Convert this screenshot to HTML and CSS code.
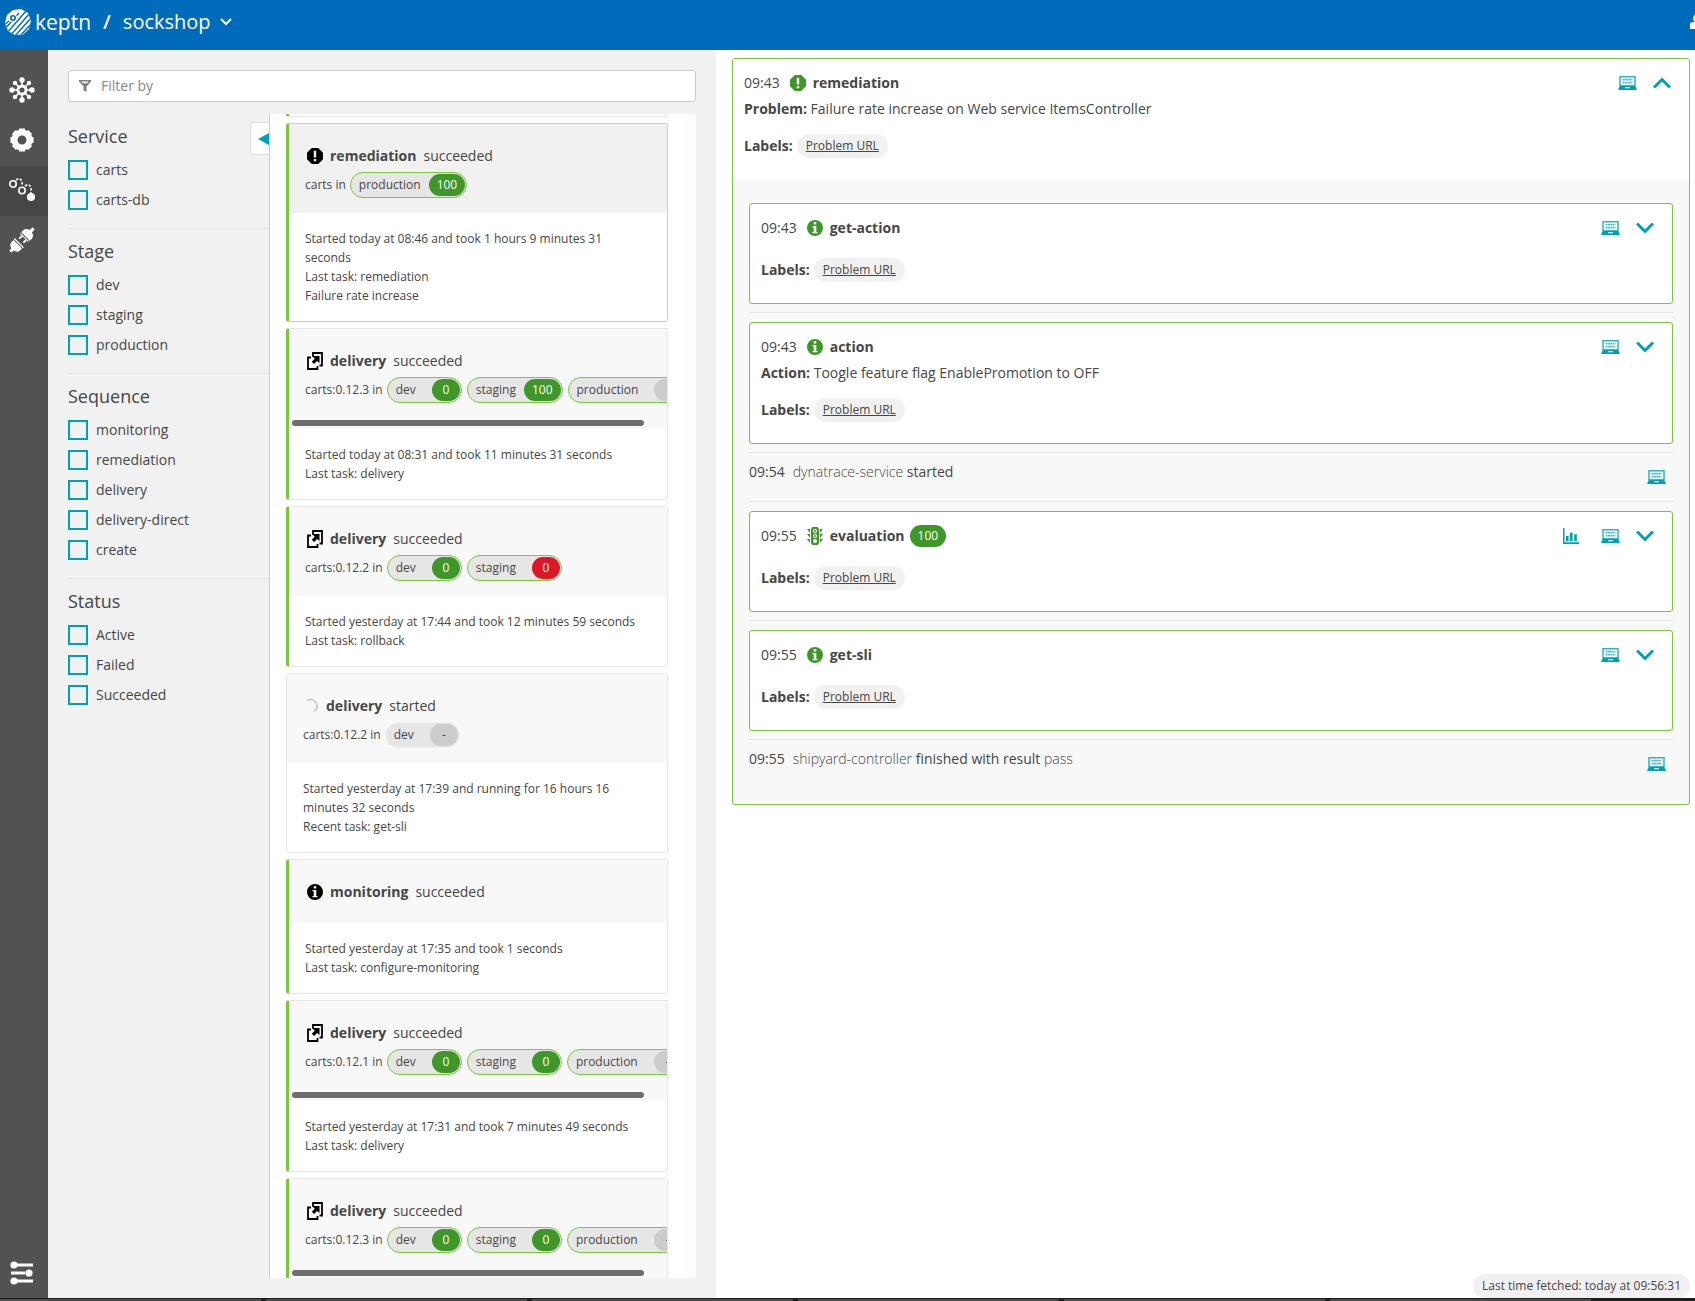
FILE: index.html
```html
<!DOCTYPE html>
<html lang="en">
<head>
<meta charset="utf-8">
<title>keptn / sockshop</title>
<link rel="stylesheet" href="styles.css">
</head>
<body>
<svg class="sprite" aria-hidden="true">
  <symbol id="i-problem" viewBox="0 0 16 16"><path fill="currentColor" fill-rule="evenodd" d="M4.8 0h6.4L16 4.8v6.4L11.200 16H4.8L0 11.200V4.800zM6.800 2.800h2.400v6.700H6.800zM6.800 11h2.400v2.200H6.800z"/></symbol>
  <symbol id="i-info" viewBox="0 0 16 16"><path fill="currentColor" fill-rule="evenodd" d="M8 0a8 8 0 1 1 0 16A8 8 0 0 1 8 0zM6.700 2.200v2.400h2.600V2.200zM5.500 6v1.300h1.200v4.700H5.500v1.300h5V12H9.300V6z"/></symbol>
  <symbol id="i-delivery" viewBox="0 0 16 18"><path fill="none" stroke="currentColor" stroke-width="1.800" d="M6 4.500V1h9v12.500h-2.500M4 5.500H1V17h9.500v-3"/><path fill="currentColor" d="M5 4H12.500v7L10 9l-3 3-2.200-2.200 3-3z"/></symbol>
  <symbol id="i-light" viewBox="0 0 16 18"><path fill="currentColor" fill-rule="evenodd" d="M5.500 0h5L12 2v14l-1.500 2h-5L4 16V2zM8 2a2 2 0 1 0 0 4 2 2 0 0 0 0-4zM8 7a2 2 0 1 0 0 4 2 2 0 0 0 0-4zM8 12a2 2 0 1 0 0 4 2 2 0 0 0 0-4z"/><circle cx="8" cy="4" r="1" fill="currentColor"/><circle cx="8" cy="9" r="1" fill="currentColor"/><path fill="currentColor" d="M0 2h3v4zM0 7h3v4zM0 12h3v4zM16 2h-3v4zM16 7h-3v4zM16 12h-3v4z"/></symbol>
  <symbol id="i-laptop" viewBox="0 0 19 14"><path fill="none" stroke="currentColor" stroke-width="1.500" opacity=".8" d="M2 10V.7h15V10"/><path stroke="currentColor" stroke-width="1.800" opacity=".7" stroke-dasharray="2 .4" d="M4.500 3.700h10M4.500 6.700h10"/><path fill="currentColor" fill-rule="evenodd" d="M2 9.200h15l2 4.800H0zM7 11.200v1h5v-1z"/></symbol>
  <symbol id="i-down" viewBox="0 0 18 12"><path fill="none" stroke="currentColor" stroke-width="3" d="M1 1.500l8 8 8-8"/></symbol>
  <symbol id="i-up" viewBox="0 0 18 12"><path fill="none" stroke="currentColor" stroke-width="3" d="M1 10.500l8-8 8 8"/></symbol>
  <symbol id="i-chart" viewBox="0 0 16 16"><path fill="currentColor" d="M0 0h1.500v14.300H16V16H0zM3 8h2.600v5H3zM7 4.500h2.600V13H7zM11.200 6.200h2.600V13h-2.600z"/></symbol>
</svg>

<header class="topbar">
  <a class="brand" href="#">
    <svg class="logo" viewBox="0 0 26 26" aria-hidden="true">
      <clipPath id="hex"><path d="M8 1l8-1 7 4 3 8-2 8-6 5.500-8 .5-7-4L0 14 2 6z"/></clipPath>
      <g clip-path="url(#hex)"><rect width="26" height="26" fill="#fff"/><path stroke="#006bba" stroke-width="1.400" fill="none" d="M-2 17L4 12M-1 21L14 4M1 25L22 1M5 27L25 4M9 28L27 8M14 28L28 13"/><circle cx="8" cy="9" r="4" fill="#fff"/><circle cx="8" cy="9" r="2.200" fill="none" stroke="#006bba" stroke-width="1.600"/></g>
    </svg>
    <span>keptn</span>
  </a>
  <span class="slash">/</span>
  <button class="project" type="button">sockshop
    <svg class="caret" viewBox="0 0 12 8" aria-hidden="true"><path fill="none" stroke="#fff" stroke-width="2" d="M1 1l5 5 5-5"/></svg>
  </button>
  <svg class="user" viewBox="0 0 5 16" aria-hidden="true"><circle cx="8" cy="4.500" r="4.800" fill="#fff"/><path fill="#fff" d="M0 9l3-1h5v7H0z"/></svg>
</header>

<div class="shell">
  <nav class="rail" aria-label="Main">
    <a href="#" aria-label="Environment"><svg viewBox="0 0 26 26"><g stroke="#fff" stroke-width="1.600"><path d="M13 3v20M3 13h20M6 6l14 14M20 6L6 20"/></g><circle cx="13" cy="13" r="5.500" fill="#fff"/><circle cx="13" cy="13" r="2.600" fill="#525252"/><g fill="#fff"><circle cx="13" cy="3" r="2.700"/><circle cx="13" cy="23" r="2.700"/><circle cx="3" cy="13" r="2.700"/><circle cx="23" cy="13" r="2.700"/><circle cx="6" cy="6" r="2.200"/><circle cx="20" cy="6" r="2.200"/><circle cx="6" cy="20" r="2.200"/><circle cx="20" cy="20" r="2.200"/></g></svg></a>
    <a href="#" aria-label="Services"><svg viewBox="0 0 26 26"><circle cx="13" cy="13" r="7.500" fill="none" stroke="#fff" stroke-width="6"/><path stroke="#fff" stroke-width="6" stroke-linejoin="round" d="M10 4.500l6 0M10 21.500l6 0M4.500 10v6M21.500 10v6M5 9l4-4M17 5l4 4M5 17l4 4M21 17l-4 4"/></svg></a>
    <a class="active" href="#" aria-label="Sequences"><svg viewBox="0 0 26 26"><g fill="none" stroke="#fff" stroke-width="1.600"><circle cx="4" cy="7" r="3.200"/><circle cx="13" cy="13.500" r="3.200"/><path stroke-dasharray="2.500 1.500" d="M7 3c4-3 7 0 6 6M16 9c4-3 7 0 6 7"/></g><circle cx="22" cy="20" r="4" fill="#fff"/></svg></a>
    <a href="#" aria-label="Integration"><svg viewBox="0 0 26 26"><g transform="translate(13 13) rotate(-45)"><path fill="#fff" d="M5 -6h2.500c3 0 4.500 2 5 4.500h4v3h-4c-.5 2.500-2 4.500-5 4.500H5zM3 -6h1v12H3zM-1 -3.800h4v1.800h-4zM-1 2h4v1.800h-4zM-6 -6h-2.500c-3 0-4.500 2-5 4.500h-3v3h3c.5 2.500 2 4.500 5 4.500H-6zM-5 -6.500h1.200v13H-5z"/></g></svg></a>
    <a class="bottom" href="#" aria-label="Settings"><svg viewBox="0 0 26 26"><g stroke="#fff" stroke-width="3"><path d="M8 5h16M2 13h14M8 21h16"/></g><g fill="#fff"><circle cx="5" cy="5" r="3.600"/><circle cx="20" cy="13" r="3.600"/><circle cx="5" cy="21" r="3.600"/></g></svg></a>
  </nav>

  <section class="browser">
    <label class="search">
      <svg viewBox="0 0 12 12" aria-hidden="true"><path fill="#808080" fill-rule="evenodd" d="M0 0h12v1.500L7.500 6.500V12l-3-1.500v-4L0 1.500zM2.200 1.500L4 3.200h4l1.800-1.700z"/></svg>
      <input type="text" placeholder="Filter by" aria-label="Filter by">
    </label>
    <div class="columns">
      <form class="filters">
        <fieldset><legend>Service</legend>
          <label><input type="checkbox">carts</label>
          <label><input type="checkbox">carts-db</label>
        </fieldset>
        <fieldset><legend>Stage</legend>
          <label><input type="checkbox">dev</label>
          <label><input type="checkbox">staging</label>
          <label><input type="checkbox">production</label>
        </fieldset>
        <fieldset><legend>Sequence</legend>
          <label><input type="checkbox">monitoring</label>
          <label><input type="checkbox">remediation</label>
          <label><input type="checkbox">delivery</label>
          <label><input type="checkbox">delivery-direct</label>
          <label><input type="checkbox">create</label>
        </fieldset>
        <fieldset><legend>Status</legend>
          <label><input type="checkbox">Active</label>
          <label><input type="checkbox">Failed</label>
          <label><input type="checkbox">Succeeded</label>
        </fieldset>
        <button class="collapse" type="button" aria-label="Collapse filters"><svg viewBox="0 0 11 12"><path fill="#00a1b2" d="M0 6l11-6v12z"/></svg></button>
      </form>

      <div class="list">
        <div class="cards">
          <article class="card ok tail"></article>

          <article class="card ok selected">
            <div class="head">
              <h3><svg class="ic"><use href="#i-problem"/></svg><b>remediation</b> <span>succeeded</span></h3>
              <div class="stages">carts in <span class="pill ok">production<span class="slot"><i class="score good">100</i></span></span></div>
            </div>
            <div class="info"><p>Started today at 08:46 and took 1 hours 9 minutes 31 seconds</p><p>Last task: remediation</p><p>Failure rate increase</p></div>
          </article>

          <article class="card ok">
            <div class="head">
              <h3><svg class="ic tall"><use href="#i-delivery"/></svg><b>delivery</b> <span>succeeded</span></h3>
              <div class="stages">carts:0.12.3 in <span class="pill ok">dev<span class="slot"><i class="score good">0</i></span></span><span class="pill ok">staging<span class="slot"><i class="score good">100</i></span></span><span class="pill ok">production<span class="slot"><i class="score">-</i></span></span></div>
              <div class="scroll"></div>
            </div>
            <div class="info"><p>Started today at 08:31 and took 11 minutes 31 seconds</p><p>Last task: delivery</p></div>
          </article>

          <article class="card ok">
            <div class="head">
              <h3><svg class="ic tall"><use href="#i-delivery"/></svg><b>delivery</b> <span>succeeded</span></h3>
              <div class="stages">carts:0.12.2 in <span class="pill ok">dev<span class="slot"><i class="score good">0</i></span></span><span class="pill ok">staging<span class="slot"><i class="score bad">0</i></span></span></div>
            </div>
            <div class="info"><p>Started yesterday at 17:44 and took 12 minutes 59 seconds</p><p>Last task: rollback</p></div>
          </article>

          <article class="card">
            <div class="head">
              <h3><svg class="ic spinner" viewBox="0 0 14 16"><path fill="none" stroke="#ccc" stroke-width="2" d="M2 2.500a6 6 0 0 1 7 11"/></svg><b>delivery</b> <span>started</span></h3>
              <div class="stages">carts:0.12.2 in <span class="pill">dev<span class="slot"><i class="score">-</i></span></span></div>
            </div>
            <div class="info"><p>Started yesterday at 17:39 and running for 16 hours 16 minutes 32 seconds</p><p>Recent task: get-sli</p></div>
          </article>

          <article class="card ok">
            <div class="head">
              <h3><svg class="ic"><use href="#i-info"/></svg><b>monitoring</b> <span>succeeded</span></h3>
            </div>
            <div class="info"><p>Started yesterday at 17:35 and took 1 seconds</p><p>Last task: configure-monitoring</p></div>
          </article>

          <article class="card ok">
            <div class="head">
              <h3><svg class="ic tall"><use href="#i-delivery"/></svg><b>delivery</b> <span>succeeded</span></h3>
              <div class="stages">carts:0.12.1 in <span class="pill ok">dev<span class="slot"><i class="score good">0</i></span></span><span class="pill ok">staging<span class="slot"><i class="score good">0</i></span></span><span class="pill ok">production<span class="slot"><i class="score">-</i></span></span></div>
              <div class="scroll"></div>
            </div>
            <div class="info"><p>Started yesterday at 17:31 and took 7 minutes 49 seconds</p><p>Last task: delivery</p></div>
          </article>

          <article class="card ok">
            <div class="head">
              <h3><svg class="ic tall"><use href="#i-delivery"/></svg><b>delivery</b> <span>succeeded</span></h3>
              <div class="stages">carts:0.12.3 in <span class="pill ok">dev<span class="slot"><i class="score good">0</i></span></span><span class="pill ok">staging<span class="slot"><i class="score good">0</i></span></span><span class="pill ok">production<span class="slot"><i class="score">-</i></span></span></div>
              <div class="scroll"></div>
            </div>
          </article>
        </div>
        <div class="track"></div>
      </div>
    </div>
  </section>

  <main class="detail">
    <section class="event root">
      <div class="event-head">
        <div class="title"><time>09:43</time><svg class="ic"><use href="#i-problem"/></svg><b>remediation</b>
          <span class="actions"><button type="button" aria-label="Payload"><svg class="laptop"><use href="#i-laptop"/></svg></button><button type="button" aria-label="Collapse"><svg class="chev"><use href="#i-up"/></svg></button></span></div>
        <p class="desc"><b>Problem:</b> Failure rate increase on Web service ItemsController</p>
        <p class="labels"><b>Labels:</b> <a href="#">Problem URL</a></p>
      </div>
      <div class="items">
        <div class="item">
          <section class="event"><div class="title"><time>09:43</time><svg class="ic"><use href="#i-info"/></svg><b>get-action</b>
            <span class="actions"><button type="button" aria-label="Payload"><svg class="laptop"><use href="#i-laptop"/></svg></button><button type="button" aria-label="Expand"><svg class="chev"><use href="#i-down"/></svg></button></span></div>
            <p class="labels"><b>Labels:</b> <a href="#">Problem URL</a></p></section>
        </div>
        <div class="item">
          <section class="event"><div class="title"><time>09:43</time><svg class="ic"><use href="#i-info"/></svg><b>action</b>
            <span class="actions"><button type="button" aria-label="Payload"><svg class="laptop"><use href="#i-laptop"/></svg></button><button type="button" aria-label="Expand"><svg class="chev"><use href="#i-down"/></svg></button></span></div>
            <p class="desc"><b>Action:</b> Toogle feature flag EnablePromotion to OFF</p>
            <p class="labels"><b>Labels:</b> <a href="#">Problem URL</a></p></section>
        </div>
        <div class="item line"><p><span class="when">09:54</span><em>dynatrace-service</em> started</p><button type="button" aria-label="Payload"><svg class="laptop"><use href="#i-laptop"/></svg></button></div>
        <div class="item">
          <section class="event"><div class="title"><time>09:55</time><svg class="ic tall"><use href="#i-light"/></svg><b>evaluation</b><i class="score good">100</i>
            <span class="actions"><button class="chart-button" type="button" aria-label="Chart"><svg class="chart"><use href="#i-chart"/></svg></button><button type="button" aria-label="Payload"><svg class="laptop"><use href="#i-laptop"/></svg></button><button type="button" aria-label="Expand"><svg class="chev"><use href="#i-down"/></svg></button></span></div>
            <p class="labels"><b>Labels:</b> <a href="#">Problem URL</a></p></section>
        </div>
        <div class="item">
          <section class="event"><div class="title"><time>09:55</time><svg class="ic"><use href="#i-info"/></svg><b>get-sli</b>
            <span class="actions"><button type="button" aria-label="Payload"><svg class="laptop"><use href="#i-laptop"/></svg></button><button type="button" aria-label="Expand"><svg class="chev"><use href="#i-down"/></svg></button></span></div>
            <p class="labels"><b>Labels:</b> <a href="#">Problem URL</a></p></section>
        </div>
        <div class="item line"><p><span class="when">09:55</span><em>shipyard-controller</em> finished with result <em>pass</em></p><button type="button" aria-label="Payload"><svg class="laptop"><use href="#i-laptop"/></svg></button></div>
      </div>
    </section>
    <div class="fetched">Last time fetched: today at 09:56:31</div>
  </main>
</div>
<footer class="taskbar"></footer>
</body>
</html>
```
FILE: styles.css
```css
* { box-sizing: border-box; }
body {
  margin: 0;
  height: 100vh;
  display: flex;
  flex-direction: column;
  overflow: hidden;
  font: 14px/20px "Open Sans", "Noto Sans", sans-serif;
  color: #454646;
  background: #fff;
}
h3, p, fieldset, legend { margin: 0; padding: 0; border: 0; }
svg { display: block; }
button { font: inherit; color: inherit; background: none; border: 0; padding: 0; cursor: pointer; }
.sprite { position: absolute; width: 0; height: 0; }

/* header */
.topbar {
  flex: none;
  height: 50px;
  padding: 0 0 6px 5px;
  display: flex;
  align-items: center;
  background: #006bba;
  color: #fff;
  font-size: 20px;
  line-height: 28px;
}
.brand { display: flex; align-items: center; gap: 4px; color: #fff; text-decoration: none; font-size: 21px; font-weight: 500; }
.logo { width: 26px; height: 26px; }
.slash { margin: 0 12px; font-weight: 600; }
.project { display: flex; align-items: center; gap: 9px; font-weight: 500; }
.caret { width: 12px; height: 8px; }
.user { width: 5px; height: 16px; margin-left: auto; }

/* shell */
.shell { flex: 1; min-height: 0; display: grid; grid-template-columns: 48px minmax(0, 668px) minmax(0, 1fr); }
.taskbar {
  flex: none;
  height: 3px;
  background: repeating-linear-gradient(90deg, #4c4c4c 0 261px, #1e1e1e 261px 266px) 0 1px / 1595px 2px no-repeat #1e1e1e;
}
.rail { background: #525252; padding-top: 16px; display: flex; flex-direction: column; }
.rail a { height: 50px; display: flex; align-items: center; padding: 0 0 2px 9px; }
.rail a.active { background: #454646; }
.rail a.bottom { margin-top: auto; padding-bottom: 0; }
.rail svg { width: 26px; height: 26px; }

/* sequence browser */
.browser { background: #f1f1f1; padding: 20px; display: flex; flex-direction: column; min-height: 0; }
.search {
  flex: none;
  height: 32px;
  display: flex;
  align-items: center;
  gap: 10px;
  padding: 0 10px;
  background: #fff;
  border: 1px solid #ccc;
  border-radius: 3px;
}
.search svg { width: 12px; height: 12px; }
.search input { flex: 1; border: 0; outline: 0; padding: 0; font: inherit; background: none; }
.search input::placeholder { color: #898989; }
.columns { flex: 1; min-height: 0; margin-top: 12px; display: flex; }
.filters { flex: none; width: 201px; position: relative; }
.filters fieldset { display: flex; flex-direction: column; gap: 10px; padding-bottom: 18px; min-width: 0; }
.filters fieldset + fieldset { border-top: 1px solid #e6e6e6; }
.filters legend { float: left; font-size: 18px; line-height: 26px; padding: 9px 0 1px; }
.filters label { display: flex; align-items: center; gap: 8px; height: 20px; }
.filters input {
  appearance: none;
  width: 20px;
  height: 20px;
  margin: 0;
  border: 2px solid #00a1b2;
}
.collapse {
  position: absolute;
  top: 8px;
  right: 0;
  width: 19px;
  height: 33px;
  display: flex;
  align-items: center;
  justify-content: flex-end;
  background: #fff;
  border: 1px solid #dcdcdc;
  border-right: 0;
  border-radius: 3px 0 0 3px;
}
.collapse svg { width: 11px; height: 12px; }
.list { flex: 1; min-width: 0; display: flex; background: #fff; border-left: 1px solid #ccc; border-radius: 0 3px 3px 0; overflow: hidden; }
.track { flex: none; width: 12px; background: #fdfdfd; }
.cards { flex: 1; min-width: 0; padding: 0 16px; display: flex; flex-direction: column; gap: 6px; }
.card { flex: none; border: 1px solid #e6e6e6; border-radius: 3px; background: #fff; overflow: hidden; }
.card.ok { border-left: 3px solid #7dc540; }
.card.tail { height: 3px; border-top: 0; border-radius: 0 0 3px 3px; }
.card.selected { border-color: #ccc #ccc #ccc #7dc540; }
.head { background: #f8f8f8; padding: 16px 16px 15px; }
.selected .head { background: #f1f1f1; }
.head:has(.scroll) { padding-bottom: 3px; }
.head h3 { display: flex; align-items: center; gap: 7px; height: 32px; padding-left: 2px; font-size: 14px; font-weight: 400; }
.ic { flex: none; width: 16px; height: 16px; color: #000; }
.ic.tall { height: 18px; }
.ic.spinner { width: 14px; }
.stages { display: flex; align-items: center; height: 26px; gap: 4px; font-size: 12px; white-space: nowrap; }
.pill { display: flex; align-items: center; height: 26px; padding: 0 1px 0 8px; border: 1px solid #f1f1f1; border-radius: 13px; background: #e6e6e6; }
.pill.ok { border-color: #7dc540; }
.pill + .pill { margin-left: 1px; }
.slot { min-width: 44px; padding-left: 8px; display: flex; justify-content: flex-end; }
.score { min-width: 28px; height: 22px; padding: 0 8px; border-radius: 11px; background: #ccc; font-size: 12px; line-height: 22px; font-style: normal; text-align: center; }
.score.good { background: #3f962a; color: #fff; }
.score.bad { background: #dc172a; color: #fff; }
.scroll { width: 352px; height: 6px; margin: 17px 0 0 -13px; border-radius: 3px; background: #6d6d6d; }
.info { padding: 16px 24px 16px 16px; font-size: 12px; line-height: 19px; }

/* event detail */
.detail { position: relative; padding: 8px 5px 0 16px; }
.event { background: #fff; border: 1px solid #7dc540; border-radius: 3px; padding: 12px 18px 21px 11px; }
.event.root { padding: 0; background: #f8f8f8; overflow: hidden; }
.event-head { background: #fff; padding: 12px 18px 21px 11px; }
.title { display: flex; align-items: center; height: 24px; margin-bottom: 4px; }
.title time { margin-right: 10px; }
.title .ic { color: #3f962a; margin-right: 7px; }
.title .score { margin-left: 5px; }
.actions { margin-left: auto; display: flex; align-items: center; gap: 16px; color: #00a1b2; }
.laptop { width: 19px; height: 14px; }
.chev { width: 18px; height: 12px; }
.chart { width: 16px; height: 16px; }
.chart-button { margin-right: 6px; }
.labels { display: flex; align-items: center; gap: 4px; margin-top: 18px; }
.desc + .labels { margin-top: 15px; }
.labels a { height: 24px; padding: 0 9px; border-radius: 12px; background: #f1f1f1; color: #454646; font-size: 12px; line-height: 24px; }
.items { padding: 24px 16px 16px; }
.item { padding: 9px 0 8px; border-top: 1px solid #e6e6e6; }
.item:first-child { padding-top: 0; border-top: 0; }
.item.line { height: 49px; display: flex; justify-content: space-between; align-items: flex-start; padding: 9px 7px 0 0; }
.line button { color: #00a1b2; margin-top: 8px; }
.line em { font-style: normal; font-weight: 300; }
.when { margin-right: 8px; }
.fetched {
  position: absolute;
  right: 5px;
  bottom: 0;
  padding: 0 9px;
  border-radius: 12px;
  background: #f1f1f1;
  font-size: 12px;
  line-height: 24px;
}
```
